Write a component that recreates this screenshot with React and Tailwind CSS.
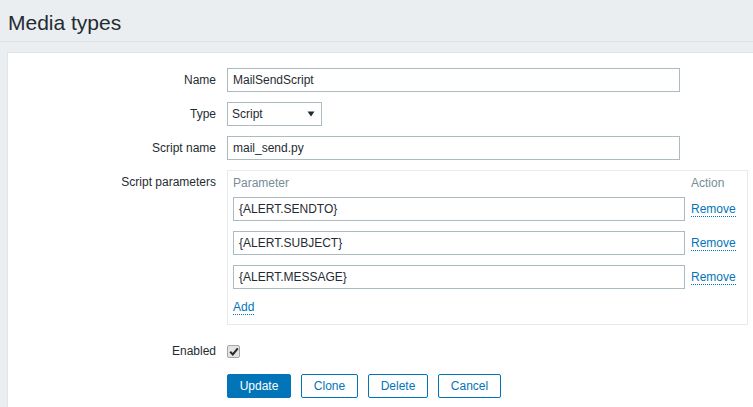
import React from "react";

function Label({ children, className = "" }) {
  return (
    <div className={"w-[208px] shrink-0 text-right pr-0 " + className}>{children}</div>
  );
}

function TextInput({ value, className = "" }) {
  return (
    <div
      className={
        "h-[24px] border border-[#acbbc2] bg-white px-[5px] flex items-center leading-[14px] " +
        className
      }
    >
      {value}
    </div>
  );
}

function Link({ children }) {
  return (
    <span className="text-[#0275b8] border-b border-dotted border-[#0275b8]">{children}</span>
  );
}

export default function App() {
  const params = ["{ALERT.SENDTO}", "{ALERT.SUBJECT}", "{ALERT.MESSAGE}"];
  return (
    <div
      className="w-[753px] h-[407px] overflow-hidden bg-[#ebeef0] flex flex-col text-[12px] leading-[14px] text-[#1f2c33]"
      style={{ fontFamily: '"Liberation Sans", Arial, sans-serif' }}
    >
      <div className="h-[42px] shrink-0 border-b border-[#dde3e6] pl-[8px] pt-[11px]">
        <h1 className="text-[21px] leading-[24px] font-normal m-0">Media types</h1>
      </div>
      <div className="flex-1 pt-[10px] pl-[7px]">
        <div className="h-full bg-white border-l border-t border-[#dfe4e7] pt-[15px]">
          {/* Name */}
          <div className="flex items-center gap-[11px]">
            <Label>Name</Label>
            <TextInput value="MailSendScript" className="w-[453px]" />
          </div>
          {/* Type */}
          <div className="flex items-center gap-[11px] mt-[10px]">
            <Label>Type</Label>
            <div className="h-[24px] w-[95px] border border-[#acbbc2] bg-white pl-[4px] pr-[6px] flex items-center justify-between">
              <span>Script</span>
              <svg width="8" height="6" viewBox="0 0 8 6">
                <polygon points="0.5,0.5 7.5,0.5 4,5.5" fill="#1f2c33" />
              </svg>
            </div>
          </div>
          {/* Script name */}
          <div className="flex items-center gap-[11px] mt-[10px]">
            <Label>Script name</Label>
            <TextInput value="mail_send.py" className="w-[453px]" />
          </div>
          {/* Script parameters */}
          <div className="flex items-start gap-[11px] mt-[10px]">
            <Label className="pt-[5px]">Script parameters</Label>
            <div className="w-[521px] border border-[#e6eaec] px-[5px] pt-[5px] pb-[10px]">
              <div className="flex text-[#768d99]">
                <div className="w-[452px]">Parameter</div>
                <div className="ml-[6px]">Action</div>
              </div>
              <div className="flex flex-col gap-[10px] mt-[7px]">
                {params.map((p) => (
                  <div key={p} className="flex items-center">
                    <TextInput value={p} className="w-[452px]" />
                    <div className="ml-[6px]">
                      <Link>Remove</Link>
                    </div>
                  </div>
                ))}
              </div>
              <div className="mt-[11px]">
                <Link>Add</Link>
              </div>
            </div>
          </div>
          {/* Enabled */}
          <div className="flex items-center gap-[11px] mt-[14px] h-[24px]">
            <Label>Enabled</Label>
            <div className="w-[13px] h-[13px] rounded-[2px] border border-[#a6a6a6] bg-[#e4e4e4] flex items-center justify-center">
              <svg width="10" height="9" viewBox="0 0 10 9">
                <path d="M1.2 4.8 L3.8 7.4 L8.8 1.4" stroke="#2b2b2b" strokeWidth="2" fill="none" />
              </svg>
            </div>
          </div>
          {/* Buttons */}
          <div className="flex gap-[10px] mt-[11px] pl-[219px]">
            <button className="h-[24px] w-[64px] rounded-[2px] border border-[#0275b8] bg-[#0275b8] text-white">
              Update
            </button>
            <button className="h-[24px] w-[57px] rounded-[2px] border border-[#0275b8] bg-white text-[#0275b8]">
              Clone
            </button>
            <button className="h-[24px] w-[60px] rounded-[2px] border border-[#0275b8] bg-white text-[#0275b8]">
              Delete
            </button>
            <button className="h-[24px] w-[63px] rounded-[2px] border border-[#0275b8] bg-white text-[#0275b8]">
              Cancel
            </button>
          </div>
        </div>
      </div>
    </div>
  );
}
